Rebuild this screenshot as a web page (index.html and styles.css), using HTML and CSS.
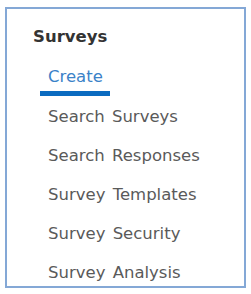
FILE: index.html
```html
<!DOCTYPE html>
<html lang="en">
<head>
  <meta charset="UTF-8" />
  <title>Surveys</title>
  <link rel="stylesheet" href="styles.css">
</head>
<body>
  <nav class="side-menu">
    <h2>Surveys</h2>
    <ul>
      <li><a href="#" class="active">Create</a></li>
      <li><a href="#">Search Surveys</a></li>
      <li><a href="#">Search Responses</a></li>
      <li><a href="#">Survey Templates</a></li>
      <li><a href="#">Survey Security</a></li>
      <li><a href="#">Survey Analysis</a></li>
    </ul>
  </nav>
</body>
</html>
```

FILE: styles.css
```css
body {margin:0; padding:7px 5px; background:#fff; font-family:"DejaVu Sans", Verdana, sans-serif;}

.side-menu {
  width:241px; height:281px; box-sizing:border-box;
  border:2px solid #84a8d6; padding:18px 0 0 26px;
}
.side-menu h2 {margin:0; font-size:16.5px; font-weight:bold; color:#333; line-height:20px;}

.side-menu ul {list-style:none; margin:0; padding:0 0 0 7px;}
.side-menu li {height:39px;}
.side-menu a {
  display:inline-block; padding:0 7px 0 8px; line-height:20px;
  font-size:16.5px; word-spacing:2px; color:#5a5a5a; text-decoration:none;
}
.side-menu li:first-child {margin-top:20px; height:40px;}
.side-menu a.active {color:#3b82c8; border-bottom:5px solid #0b6bc0; padding-bottom:4px;}
```
